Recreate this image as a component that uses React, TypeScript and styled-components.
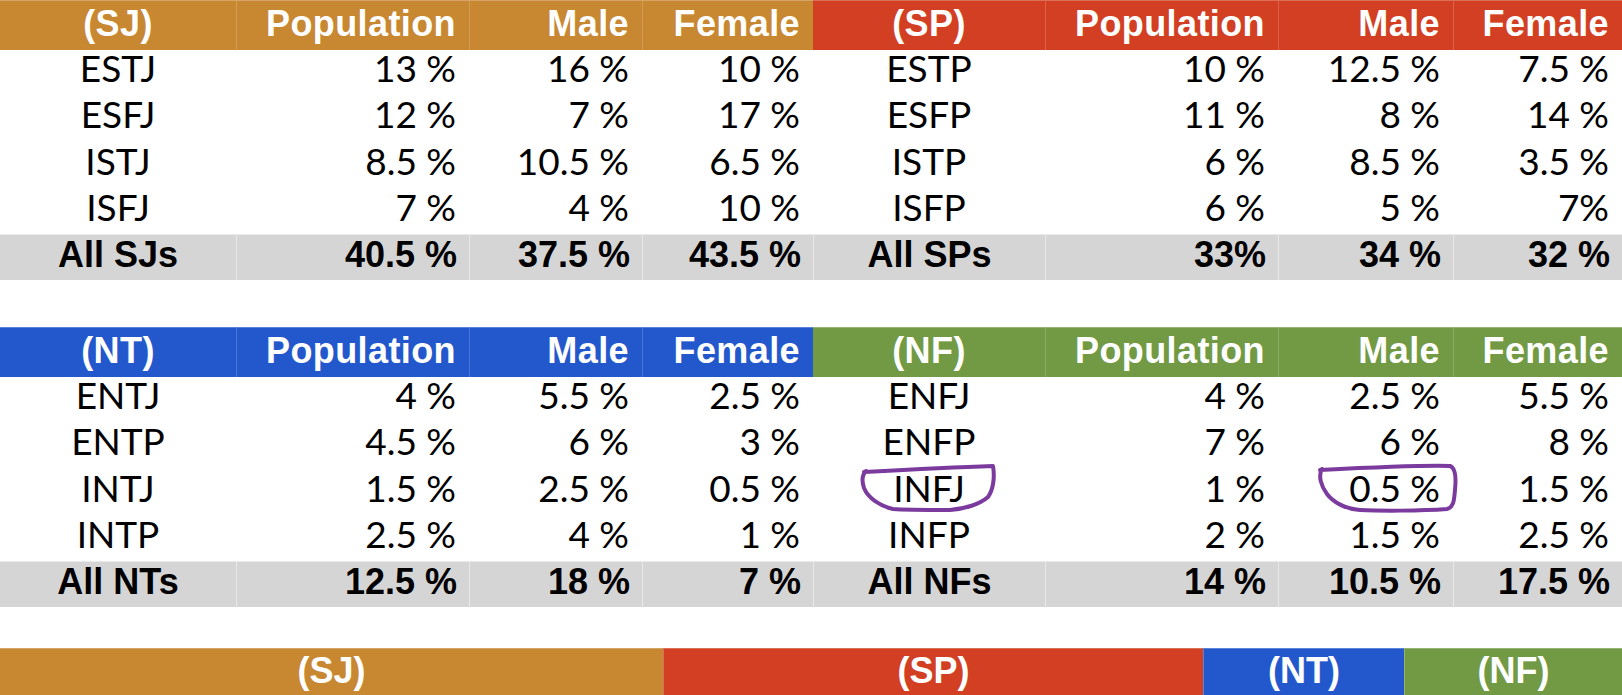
import React from "react";
import styled, { createGlobalStyle } from "styled-components";

const GlobalStyle = createGlobalStyle`
  html, body { margin: 0; padding: 0; background: #ffffff; }
  #root { width: 1622px; height: 695px; }
`;

const COLS = "236px 233px 173px 171px 232px 233px 175px 169px";

const COLORS = {
  SJ: "#c88731",
  SP: "#d23f23",
  NT: "#2358cd",
  NF: "#729a45",
  gray: "#d5d5d5",
  ink: "#000000",
  mark: "#7b3a9e",
};

type Group = keyof Omit<typeof COLORS, "gray" | "ink" | "mark">;

const Page = styled.div`
  position: relative;
  width: 1622px;
  height: 695px;
  overflow: hidden;
  display: flex;
  flex-direction: column;
  background: #fff;
`;

const Table = styled.section<{ $gapAfter: number }>`
  display: flex;
  flex-direction: column;
  margin-bottom: ${(p) => p.$gapAfter}px;
`;

const HeaderRow = styled.div`
  display: grid;
  grid-template-columns: ${COLS};
  height: 49px;
`;

const HeaderCell = styled.div<{ $bg: string; $align: "center" | "right"; $first?: boolean }>`
  background: ${(p) => p.$bg};
  color: #ffffff;
  font-family: "Liberation Sans", Arial, sans-serif;
  font-weight: 700;
  font-size: 36px;
  letter-spacing: 0.4px;
  line-height: 45px;
  padding: 0 13px 4px 0;
  text-align: ${(p) => p.$align};
  padding-left: ${(p) => (p.$align === "center" ? "13px" : "0")};
  border-left: ${(p) => (p.$first ? "none" : "1px solid rgba(255,255,255,0.18)")};
  border-top: 1px solid rgba(255, 255, 255, 0.25);
  white-space: nowrap;
`;

const BodyRow = styled.div`
  display: grid;
  grid-template-columns: ${COLS};
  height: 46.25px;
`;

const BodyCell = styled.div<{ $align: "center" | "right" }>`
  color: ${COLORS.ink};
  font-family: Lato, "Liberation Sans", sans-serif;
  font-weight: 400;
  font-size: 37px;
  line-height: 38px;
  padding: 0 13px 8px 0;
  padding-left: ${(p) => (p.$align === "center" ? "13px" : "0")};
  text-align: ${(p) => p.$align};
  white-space: nowrap;
`;

const TotalRow = styled.div`
  display: grid;
  grid-template-columns: ${COLS};
  height: 46px;
  background: ${COLORS.gray};
  border-top: 1px solid rgba(255, 255, 255, 0.5);
  box-sizing: border-box;
`;

const TotalCell = styled.div<{ $align: "center" | "right"; $first?: boolean }>`
  color: ${COLORS.ink};
  font-family: "Liberation Sans", Arial, sans-serif;
  font-weight: 700;
  font-size: 36px;
  line-height: 40px;
  padding: 0 12px 5px 0;
  padding-left: ${(p) => (p.$align === "center" ? "12px" : "0")};
  text-align: ${(p) => p.$align};
  border-left: ${(p) => (p.$first ? "none" : "1px solid rgba(255,255,255,0.45)")};
  white-space: nowrap;
`;

const Bar = styled.div`
  display: grid;
  grid-template-columns: 663px 540px 201px 218px;
  height: 47px;
`;

const BarSegment = styled.div<{ $bg: string; $first?: boolean }>`
  background: ${(p) => p.$bg};
  color: #ffffff;
  font-family: "Liberation Sans", Arial, sans-serif;
  font-weight: 700;
  font-size: 36px;
  line-height: 44px;
  text-align: center;
  border-top: 1px solid rgba(255, 255, 255, 0.25);
  border-left: ${(p) => (p.$first ? "none" : "1px solid rgba(255,255,255,0.25)")};
`;

const Marks = styled.svg`
  position: absolute;
  left: 0;
  top: 0;
  width: 1622px;
  height: 695px;
  pointer-events: none;
`;

type Row = [string, string, string, string];
type Block = { group: Group; rows: Row[]; total: Row };

const tables: { left: Block; right: Block; gap: number }[] = [
  {
    gap: 47,
    left: {
      group: "SJ",
      rows: [
        ["ESTJ", "13 %", "16 %", "10 %"],
        ["ESFJ", "12 %", "7 %", "17 %"],
        ["ISTJ", "8.5 %", "10.5 %", "6.5 %"],
        ["ISFJ", "7 %", "4 %", "10 %"],
      ],
      total: ["All SJs", "40.5 %", "37.5 %", "43.5 %"],
    },
    right: {
      group: "SP",
      rows: [
        ["ESTP", "10 %", "12.5 %", "7.5 %"],
        ["ESFP", "11 %", "8 %", "14 %"],
        ["ISTP", "6 %", "8.5 %", "3.5 %"],
        ["ISFP", "6 %", "5 %", "7%"],
      ],
      total: ["All SPs", "33%", "34 %", "32 %"],
    },
  },
  {
    gap: 41,
    left: {
      group: "NT",
      rows: [
        ["ENTJ", "4 %", "5.5 %", "2.5 %"],
        ["ENTP", "4.5 %", "6 %", "3 %"],
        ["INTJ", "1.5 %", "2.5 %", "0.5 %"],
        ["INTP", "2.5 %", "4 %", "1 %"],
      ],
      total: ["All NTs", "12.5 %", "18 %", "7 %"],
    },
    right: {
      group: "NF",
      rows: [
        ["ENFJ", "4 %", "2.5 %", "5.5 %"],
        ["ENFP", "7 %", "6 %", "8 %"],
        ["INFJ", "1 %", "0.5 %", "1.5 %"],
        ["INFP", "2 %", "1.5 %", "2.5 %"],
      ],
      total: ["All NFs", "14 %", "10.5 %", "17.5 %"],
    },
  },
];

const headerLabels = (g: Group) => [`(${g})`, "Population", "Male", "Female"];

const PairTable: React.FC<{ left: Block; right: Block; gap: number }> = ({ left, right, gap }) => {
  const blocks = [left, right];
  return (
    <Table $gapAfter={gap}>
      <HeaderRow>
        {blocks.flatMap((b, bi) =>
          headerLabels(b.group).map((label, i) => (
            <HeaderCell
              key={`${bi}-${i}`}
              $bg={COLORS[b.group]}
              $align={i === 0 ? "center" : "right"}
              $first={i === 0}
            >
              {label}
            </HeaderCell>
          ))
        )}
      </HeaderRow>
      {left.rows.map((_, r) => (
        <BodyRow key={r}>
          {blocks.flatMap((b, bi) =>
            b.rows[r].map((v, i) => (
              <BodyCell key={`${bi}-${i}`} $align={i === 0 ? "center" : "right"}>
                {v}
              </BodyCell>
            ))
          )}
        </BodyRow>
      ))}
      <TotalRow>
        {blocks.flatMap((b, bi) =>
          b.total.map((v, i) => (
            <TotalCell key={`${bi}-${i}`} $align={i === 0 ? "center" : "right"} $first={bi === 0 && i === 0}>
              {v}
            </TotalCell>
          ))
        )}
      </TotalRow>
    </Table>
  );
};

export default function App() {
  return (
    <>
      <GlobalStyle />
      <Page>
        {tables.map((t, i) => (
          <PairTable key={i} left={t.left} right={t.right} gap={t.gap} />
        ))}
        <Bar>
          <BarSegment $bg={COLORS.SJ} $first>(SJ)</BarSegment>
          <BarSegment $bg={COLORS.SP}>(SP)</BarSegment>
          <BarSegment $bg={COLORS.NT}>(NT)</BarSegment>
          <BarSegment $bg={COLORS.NF}>(NF)</BarSegment>
        </Bar>
        <Marks viewBox="0 0 1622 695">
          <path
            d="M 864 472 C 900 470, 960 467, 993 466 C 995 478, 993 490, 988 497 C 980 504, 965 509, 950 510 C 930 510, 905 510, 893 509 C 880 506, 868 498, 864 488 C 862 482, 861 476, 866 471"
            fill="none"
            stroke={COLORS.mark}
            strokeWidth={4}
            strokeLinecap="round"
            strokeLinejoin="round"
          />
          <path
            d="M 1320 470 C 1360 468, 1420 465, 1450 466 C 1456 468, 1456 480, 1455 490 C 1454 500, 1454 507, 1447 509 C 1420 511, 1380 511, 1360 510 C 1345 509, 1333 502, 1327 494 C 1321 486, 1318 476, 1322 469"
            fill="none"
            stroke={COLORS.mark}
            strokeWidth={4}
            strokeLinecap="round"
            strokeLinejoin="round"
          />
        </Marks>
      </Page>
    </>
  );
}
